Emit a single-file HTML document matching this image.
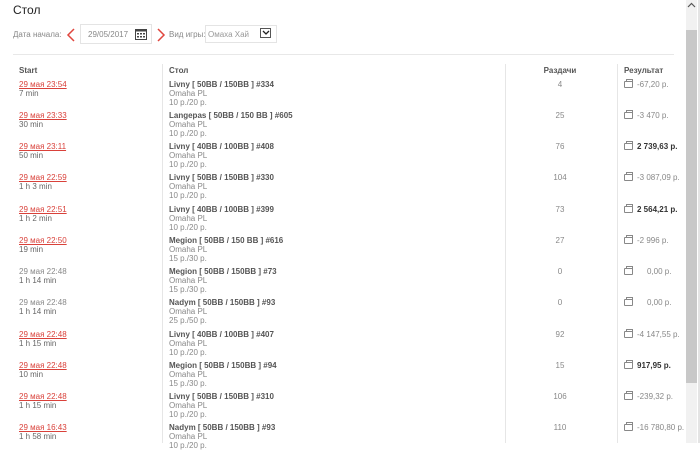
<!DOCTYPE html>
<html><head><meta charset="utf-8"><style>
*{margin:0;padding:0;box-sizing:border-box}
body{width:700px;height:443px;overflow:hidden;background:#fff;font-family:"Liberation Sans",sans-serif;color:#666;position:relative}
.a{position:absolute;white-space:nowrap}
.t{font-size:12px;color:#222;left:13px;top:3px}
.s{font-size:8px;line-height:9px}
.lnk{color:#d9413a;text-decoration:underline}
.b{font-weight:bold;color:#555}
.vl{position:absolute;width:1px;background:#e6e6e6;top:64px;height:379px}
.ic{position:absolute;width:9px;height:7px;border:1px solid #888;border-radius:1px}
.ic:before{content:"";position:absolute;left:1px;top:-3px;width:5px;height:2px;border:1px solid #888;border-bottom:none}
</style></head><body>
<div class="a t">Стол</div>
<div class="a s" style="left:13px;top:30px;color:#888">Дата начала:</div>
<svg class="a" style="left:66px;top:28px" width="10" height="14"><path d="M8 1 L2 7 L8 13" stroke="#e0463e" stroke-width="1.5" fill="none"/></svg>
<div class="a" style="left:80px;top:24px;width:72px;height:20px;border:1px solid #e4e4e4"></div>
<div class="a s" style="left:88px;top:30px;color:#888">29/05/2017</div>
<svg class="a" style="left:135px;top:28px" width="12" height="12"><rect x="0.5" y="1.5" width="11" height="10" fill="none" stroke="#444"/><rect x="0.5" y="1.5" width="11" height="2" fill="#444"/><g fill="#444"><rect x="2" y="5" width="2" height="1.5"/><rect x="5" y="5" width="2" height="1.5"/><rect x="8" y="5" width="2" height="1.5"/><rect x="2" y="8" width="2" height="1.5"/><rect x="5" y="8" width="2" height="1.5"/><rect x="8" y="8" width="2" height="1.5"/></g></svg>
<svg class="a" style="left:156px;top:28px" width="10" height="14"><path d="M2 1 L8 7 L2 13" stroke="#e0463e" stroke-width="1.5" fill="none"/></svg>
<div class="a s" style="left:169px;top:30px;color:#888">Вид игры:</div>
<div class="a" style="left:205px;top:25px;width:72px;height:18px;border:1px solid #e4e4e4"></div>
<div class="a s" style="left:208px;top:30px;color:#999">Омаха Хай</div>
<div class="a" style="left:260px;top:28px;width:11px;height:10px;border:1px solid #555"></div>
<svg class="a" style="left:262px;top:30px" width="8" height="6"><path d="M1 1 L4 4 L7 1" stroke="#222" stroke-width="1.3" fill="none"/></svg>
<div class="a" style="left:13px;top:54px;width:661px;height:1px;background:#e8e8e8"></div>
<div class="vl" style="left:162px"></div>
<div class="vl" style="left:505px"></div>
<div class="vl" style="left:617px"></div>
<div class="a s b" style="left:19px;top:66px">Start</div>
<div class="a s b" style="left:169px;top:66px">Стол</div>
<div class="a s b" style="left:530px;top:66px;width:60px;text-align:center">Раздачи</div>
<div class="a s b" style="left:624px;top:66px">Результат</div>
<div id="rows"></div>
<div class="a" style="left:686px;top:0;width:11px;height:443px;background:#f1f1f1"></div>
<div class="a" style="left:686px;top:30px;width:11px;height:353px;background:#c8c8c8"></div>
<svg class="a" style="left:687px;top:2px" width="9" height="6"><path d="M1 5 L4.5 1.5 L8 5" stroke="#555" stroke-width="1.2" fill="none"/></svg>
<div class="a" style="left:698px;top:0;width:2px;height:443px;background:#e4e4e4"></div>
<script>
var d=[["29 мая 23:54",1,"7 min","Livny [ 50BB / 150BB ] #334","10 р./20 р.","4","-67,20 р.",0],
["29 мая 23:33",1,"30 min","Langepas [ 50BB / 150 BB ] #605","10 р./20 р.","25","-3 470 р.",0],
["29 мая 23:11",1,"50 min","Livny [ 40BB / 100BB ] #408","10 р./20 р.","76","2 739,63 р.",1],
["29 мая 22:59",1,"1 h 3 min","Livny [ 50BB / 150BB ] #330","10 р./20 р.","104","-3 087,09 р.",0],
["29 мая 22:51",1,"1 h 2 min","Livny [ 40BB / 100BB ] #399","10 р./20 р.","73","2 564,21 р.",1],
["29 мая 22:50",1,"19 min","Megion [ 50BB / 150 BB ] #616","15 р./30 р.","27","-2 996 р.",0],
["29 мая 22:48",0,"1 h 14 min","Megion [ 50BB / 150BB ] #73","15 р./30 р.","0","0,00 р.",0],
["29 мая 22:48",0,"1 h 14 min","Nadym [ 50BB / 150BB ] #93","25 р./50 р.","0","0,00 р.",0],
["29 мая 22:48",1,"1 h 15 min","Livny [ 40BB / 100BB ] #407","10 р./20 р.","92","-4 147,55 р.",0],
["29 мая 22:48",1,"10 min","Megion [ 50BB / 150BB ] #94","15 р./30 р.","15","917,95 р.",1],
["29 мая 22:48",1,"1 h 15 min","Livny [ 50BB / 150BB ] #310","10 р./20 р.","106","-239,32 р.",0],
["29 мая 16:43",1,"1 h 58 min","Nadym [ 50BB / 150BB ] #93","10 р./20 р.","110","-16 780,80 р.",0]];
var h="";
d.forEach(function(r,i){var y=79.5+i*31.27;
h+='<div class="a s '+(r[1]?'lnk':'')+'" style="left:19px;top:'+y+'px;'+(r[1]?'':'color:#888')+'">'+r[0]+'</div>';
h+='<div class="a s" style="left:19px;top:'+(y+9)+'px">'+r[2]+'</div>';
h+='<div class="a s b" style="left:169px;top:'+y+'px">'+r[3]+'</div>';
h+='<div class="a s" style="left:169px;top:'+(y+9)+'px;color:#888">Omaha PL</div>';
h+='<div class="a s" style="left:169px;top:'+(y+18)+'px;color:#888">'+r[4]+'</div>';
h+='<div class="a s" style="left:530px;top:'+y+'px;width:60px;text-align:center;color:#888">'+r[5]+'</div>';
h+='<div class="ic" style="left:624px;top:'+(y+1)+'px"></div>';
var lx=r[6]=="0,00 р."?647:637;
h+='<div class="a s'+(r[7]?' b':'')+'" style="left:'+lx+'px;top:'+y+'px;'+(r[7]?'color:#333':'color:#888')+'">'+r[6]+'</div>';
});
document.getElementById("rows").innerHTML=h;
</script>
</body></html>
